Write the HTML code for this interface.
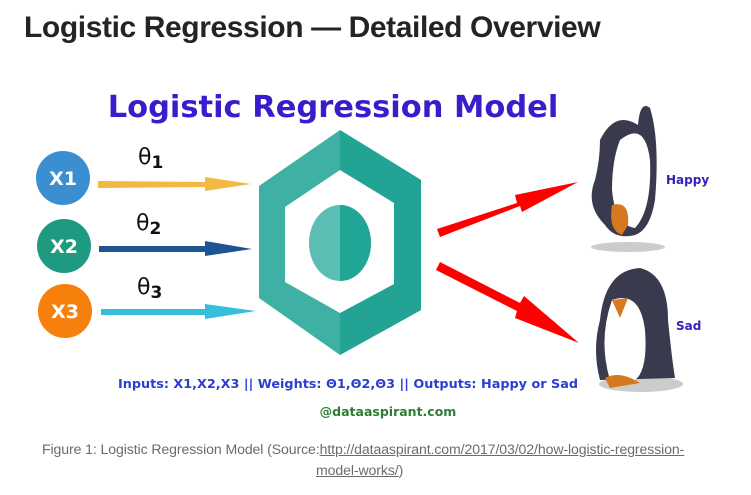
<!DOCTYPE html><html><head><style>
body{margin:0;width:751px;height:495px;background:#fff;overflow:hidden;font-family:"Liberation Sans",sans-serif;position:relative}
.t{position:absolute;left:24px;top:11px;font-size:30px;font-weight:bold;color:#242424;letter-spacing:-0.4px}
.c{position:absolute;left:42px;width:700px;color:#6b6b6b;font-size:14.1px;line-height:21px;top:439px;letter-spacing:-0.1px}
.c u{color:#6b6b6b}
</style></head><body>
<div class="t">Logistic Regression — Detailed Overview</div>
<svg width="751" height="430" style="position:absolute;left:0;top:0" font-family="DejaVu Sans,sans-serif">
<text x="333" y="117" text-anchor="middle" font-size="30.5" font-weight="bold" fill="#3a1ccc">Logistic Regression Model</text>
<circle cx="63" cy="178" r="27" fill="#3b8fd0"/><text x="63" y="185" text-anchor="middle" font-size="19" font-weight="bold" fill="#fff">X1</text>
<circle cx="64" cy="246" r="27" fill="#1e9a80"/><text x="64" y="253" text-anchor="middle" font-size="19" font-weight="bold" fill="#fff">X2</text>
<circle cx="65" cy="311" r="27" fill="#f77f0c"/><text x="65" y="318" text-anchor="middle" font-size="19" font-weight="bold" fill="#fff">X3</text>
<text x="138" y="164" font-size="22" fill="#111">θ<tspan font-size="17" font-weight="bold" dy="4">1</tspan></text>
<text x="136" y="230" font-size="22" fill="#111">θ<tspan font-size="17" font-weight="bold" dy="4">2</tspan></text>
<text x="137" y="294" font-size="22" fill="#111">θ<tspan font-size="17" font-weight="bold" dy="4">3</tspan></text>
<polygon points="98,181 205,182 205,177 251,184 205,191 205,187 98,188" fill="#f2b844"/>
<polygon points="99,246 205,246 205,241 252,249 205,256 205,252 99,252" fill="#1c5494"/>
<polygon points="101,309 205,309 205,304 256,311 205,319 205,315 101,315" fill="#35bfdc"/>
<polygon points="340,130 421,180 421,310 340,355 259,298 259,186" fill="#3fb0a4"/>
<polygon points="340,130 421,180 421,310 340,355" fill="#23a393"/>
<polygon points="340,170 394,203 394,284 340,313 285,282 285,207" fill="#fff"/>
<ellipse cx="340" cy="243" rx="31" ry="38" fill="#5cbdb3"/>
<path d="M340 205 A31 38 0 0 1 340 281Z" fill="#21a594"/>
<polygon points="437,229 517,203 515,195 578,182 522,212 520,206 440,237" fill="#f00"/>
<polygon points="440,262 520,303 524,296 579,343 515,318 517,311 436,270" fill="#f00"/>
<ellipse cx="628" cy="247" rx="37" ry="5" fill="#ccc"/>
<path d="M600 140 Q615 110 638 125 Q640 100 650 108 Q660 140 655 200 Q650 230 635 235 Q615 240 605 225 Q585 205 595 180 Q600 160 600 140Z" fill="#3a3a4e"/>
<path d="M620 140 Q645 120 650 160 Q652 210 635 228 Q615 225 612 190 Q612 160 620 140Z" fill="#fff"/>
<path d="M612 205 Q630 200 628 225 L622 235 Q608 230 612 205Z" fill="#d5781e"/>
<ellipse cx="641" cy="384" rx="42" ry="8" fill="#ccc"/>
<path d="M600 320 Q605 270 640 268 Q668 275 668 320 Q672 360 675 378 L600 380 Q592 350 600 320Z" fill="#3a3a4e"/>
<path d="M612 300 Q640 290 645 330 Q648 370 635 380 L610 380 Q598 340 612 300Z" fill="#fff"/>
<path d="M612 300 L628 298 L620 318Z" fill="#d5781e"/>
<path d="M605 378 Q620 370 640 383 L610 388Z" fill="#d5781e"/>
<text x="666" y="184" font-size="12" font-weight="bold" fill="#3322bb">Happy</text>
<text x="676" y="330" font-size="12" font-weight="bold" fill="#3322bb">Sad</text>
<text x="348" y="388" text-anchor="middle" font-size="12.8" font-weight="bold" fill="#2a3fd0">Inputs: X1,X2,X3 || Weights: Θ1,Θ2,Θ3 || Outputs: Happy or Sad</text>
<text x="388" y="416" text-anchor="middle" font-size="12.5" font-weight="bold" fill="#2e7d32">@dataaspirant.com</text>
</svg>
<div class="c">Figure 1: Logistic Regression Model (Source:<u>http://dataaspirant.com/2017/03/02/how-logistic-regression-</u><br><span style="padding-left:274px"><u>model-works/</u>)</span></div>
</body></html>
